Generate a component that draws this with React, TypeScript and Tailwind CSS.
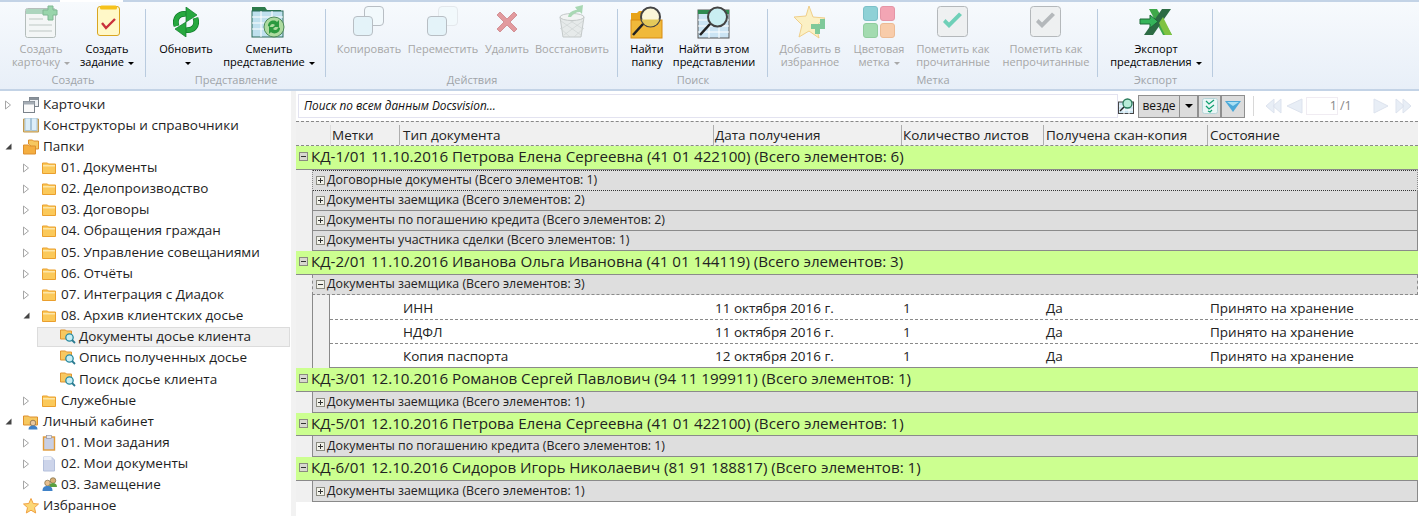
import React from 'react';

const font = { fontFamily: '"Open Sans", "Noto Sans", sans-serif' };

// ---- ribbon icons ----
const CardIcon = () => (
  <svg width="34" height="34" viewBox="0 0 34 34" className="opacity-70">
    <rect x="1.500" y="3.500" width="30" height="29" rx="2" fill="#f4f6f4" stroke="#9aa5a0" />
    <rect x="2" y="4" width="29" height="5" fill="#8fc7a5" />
    <path d="M5 14h14M5 20h23M5 26h23" stroke="#a9b4ae" />
    <path d="M20 5h5V1h5v4h4v5h-4v5h-5v-5h-5z" transform="translate(-1 0)" fill="#72c689" stroke="#4f9c68" />
  </svg>
);
const TaskIcon = () => (
  <svg width="34" height="34" viewBox="0 0 34 34">
    <rect x="7.500" y="1.500" width="22" height="29" rx="2.500" fill="#fff8c8" stroke="#d9a520" />
    <rect x="10" y=".5" width="17" height="4" rx="1.500" fill="#f6c21c" />
    <path d="M12 18l4 5 9-9" fill="none" stroke="#c9303c" strokeWidth="2.400" />
  </svg>
);
const RefreshArrow = () => (
  <>
    <path d="M3.500 19C1 11 6 6 13 7" fill="none" stroke="#0f7a2a" strokeWidth="5.800" />
    <path d="M3.500 19C1 11 6 6 13 7" fill="none" stroke="#27a83f" strokeWidth="4.400" />
    <path d="M13 0l11 8-11 7z" fill="#27a83f" stroke="#0f7a2a" strokeWidth=".7" />
  </>
);
const RefreshIcon = () => (
  <svg width="26" height="30" viewBox="0 0 26 30">
    <RefreshArrow />
    <g transform="rotate(180 13 15)">
      <RefreshArrow />
    </g>
  </svg>
);
const ChangeViewIcon = () => (
  <svg width="36" height="36" viewBox="0 0 36 36">
    <path d="M1 8V3h13l2 3h14v4z" fill="#2d7a4a" />
    <rect x="1" y="7" width="31" height="26" fill="#bfe0ee" stroke="#2a6a5a" />
    <path d="M1 13h31M1 19h31M1 25h31M10 7v26M21 7v26" stroke="#fff" />
    <circle cx="23" cy="23" r="10" fill="#aedba0" stroke="#4d8a58" />
    <path d="M17 22c0-5 6-7 9-4l2-2v7h-6l2-2c-2-2-5-1-5 2zM29 24c0 5-6 7-9 4l-2 2v-7h6l-2 2c2 2 5 1 5-2z" fill="#2c9a40" />
  </svg>
);
const CopyIcon = ({ faded }: { faded?: boolean }) => (
  <svg width="34" height="34" viewBox="0 0 34 34">
    <rect x="12.500" y="1.500" width="19" height="19" rx="3.500" fill="#f2f9fc" stroke={faded ? '#e4e8ec' : '#b8bec4'} />
    <rect x="1.500" y="11.500" width="19" height="19" rx="3.500" fill="#e4f3f9" stroke="#b8bec4" />
  </svg>
);
const DeleteIcon = () => (
  <svg width="24" height="24" viewBox="0 0 24 24">
    <path d="M2 5l3-3 7 7 7-7 3 3-7 7 7 7-3 3-7-7-7 7-3-3 7-7z" fill="#e29a9e" stroke="#c97a80" strokeWidth=".7" />
  </svg>
);
const RestoreIcon = () => (
  <svg width="28" height="36" viewBox="0 0 28 36">
    <path d="M2 13h24l-3 20H5z" fill="#e6eaea" stroke="#c4c9c9" />
    <path d="M3 17l20 14M8 14l17 11M2 24l10 9M25 17L6 31M20 14L3 25M26 24l-10 9" stroke="#cfd4d4" strokeWidth=".7" />
    <ellipse cx="14" cy="13" rx="12" ry="3.500" fill="#f2f4f4" stroke="#c4c9c9" />
    <path d="M10 13c1-5 5-7 9-7l-2-3 8-2-1 9-2-2c-4 0-7 2-9 5z" fill="#a9d8b4" />
  </svg>
);
const FindFolderIcon = () => (
  <svg width="34" height="34" viewBox="0 0 34 34">
    <path d="M1 33V8h6l2-2h8v27z" fill="#e8a317" />
    <rect x="1" y="15" width="31" height="18" fill="#f0b93a" stroke="#d98c10" />
    <circle cx="20.500" cy="12" r="9.500" fill="#faf6d8" stroke="#444" strokeWidth="2" />
    <path d="M11.500 14.500h18a9.300 9.300 0 0 1-18 0z" fill="#e4c95a" />
    <path d="M13 19L3 30" stroke="#222" strokeWidth="2.600" />
  </svg>
);
const FindViewIcon = () => (
  <svg width="34" height="34" viewBox="0 0 34 34">
    <rect x="1" y="5" width="31" height="28" fill="#cbe4f4" stroke="#555" />
    <rect x="1" y="5" width="31" height="4" fill="#2d8a50" />
    <path d="M1 15h31M1 21h31M1 27h31M12 9v24M22 9v24" stroke="#fff" />
    <circle cx="20.500" cy="12" r="9.500" fill="#c9eef2" stroke="#444" strokeWidth="2" />
    <path d="M13 19L3 30" stroke="#222" strokeWidth="2.600" />
  </svg>
);
const StarAddIcon = () => (
  <svg width="34" height="34" viewBox="0 0 34 34">
    <path d="M16 1l4 11 12 1-9 8 3 12-10-7-10 6 3-12-8-8 12-1z" fill="#fbf0c4" stroke="#f0cf8a" />
    <path d="M22 19h5v-5h5v5h0v5h-5v5h-5v-5h-4v-5z" fill="#7fc99a" />
  </svg>
);
const ColorIcon = () => (
  <div className="grid grid-cols-2 gap-[2px] w-[32px] h-[32px]">
    <div className="rounded-[3px] bg-[#8ed1d6] border border-[#7cc0c8]" />
    <div className="rounded-[3px] bg-[#f3a5b4] border border-[#e595a6]" />
    <div className="rounded-[3px] bg-[#a3dbb0] border border-[#90cc9e]" />
    <div className="rounded-[3px] bg-[#f8ccaa] border border-[#ecbb94]" />
  </div>
);
const CheckIcon = ({ color }: { color: string }) => (
  <svg width="32" height="32" viewBox="0 0 32 32">
    <rect x=".5" y=".5" width="30" height="30" rx="3" fill="#eef0f1" stroke="#b4b8bb" />
    <path d="M6 16l6 6 13-13-3-2.500-10 10-3.500-3.500z" fill={color} />
  </svg>
);
const ExportIcon = () => (
  <svg width="34" height="28" viewBox="0 0 34 28">
    <path d="M10 1h8l15 26h-9z" fill="#3fa84a" />
    <path d="M23 1h9L14 27H5z" fill="#2c6b44" />
    <path d="M20 15l6 12h7L24 9z" fill="#7fc241" />
    <path d="M1 11h10V7l8 6.500L11 20v-4H1z" fill="#35b45a" stroke="#1e6a38" />
  </svg>
);

// ---- ribbon ----
type RibbonBtn = { w: string; icon: React.ReactNode; lines: string[]; arrow?: boolean; off?: boolean };
type RibbonGroup = { title: string; w: string; pl: string; items: RibbonBtn[] };

const groups: RibbonGroup[] = [
  {
    title: 'Создать', w: 'w-[146px]', pl: 'pl-[8px]',
    items: [
      { w: 'w-[66px]', icon: <CardIcon />, lines: ['Создать', 'карточку'], arrow: true, off: true },
      { w: 'w-[66px]', icon: <TaskIcon />, lines: ['Создать', 'задание'], arrow: true },
    ],
  },
  {
    title: 'Представление', w: 'w-[180px]', pl: 'pl-[10px]',
    items: [
      { w: 'w-[60px]', icon: <RefreshIcon />, lines: ['Обновить', ''], arrow: true },
      { w: 'w-[106px]', icon: <ChangeViewIcon />, lines: ['Сменить', 'представление'], arrow: true },
    ],
  },
  {
    title: 'Действия', w: 'w-[292px]', pl: 'pl-[7px]',
    items: [
      { w: 'w-[72px]', icon: <CopyIcon />, lines: ['Копировать'], off: true },
      { w: 'w-[76px]', icon: <CopyIcon faded />, lines: ['Переместить'], off: true },
      { w: 'w-[52px]', icon: <DeleteIcon />, lines: ['Удалить'], off: true },
      { w: 'w-[78px]', icon: <RestoreIcon />, lines: ['Восстановить'], off: true },
    ],
  },
  {
    title: 'Поиск', w: 'w-[150px]', pl: 'pl-[9px]',
    items: [
      { w: 'w-[40px]', icon: <FindFolderIcon />, lines: ['Найти', 'папку'] },
      { w: 'w-[94px]', icon: <FindViewIcon />, lines: ['Найти в этом', 'представлении'] },
    ],
  },
  {
    title: 'Метка', w: 'w-[330px]', pl: 'pl-[4px]',
    items: [
      { w: 'w-[76px]', icon: <StarAddIcon />, lines: ['Добавить в', 'избранное'], off: true },
      { w: 'w-[62px]', icon: <ColorIcon />, lines: ['Цветовая', 'метка'], arrow: true, off: true },
      { w: 'w-[86px]', icon: <CheckIcon color="#6fd0b8" />, lines: ['Пометить как', 'прочитанные'], off: true },
      { w: 'w-[100px]', icon: <CheckIcon color="#b4b8bb" />, lines: ['Пометить как', 'непрочитанные'], off: true },
    ],
  },
  {
    title: 'Экспорт', w: 'w-[115px]', pl: 'pl-[2px]',
    items: [{ w: 'w-[112px]', icon: <ExportIcon />, lines: ['Экспорт', 'представления'], arrow: true }],
  },
];

const Caret = ({ off }: { off?: boolean }) => (
  <span className={`inline-block ml-[4px] align-middle border-x-[3px] border-t-[3px] border-x-transparent ${off ? 'border-t-[#a8a8a8]' : 'border-t-black'}`} />
);

const Ribbon = () => (
  <div className="relative h-[91px] flex border-t-2 border-b-2 border-t-[#c3d3e6] border-b-[#c3d3e6] bg-gradient-to-b from-[#f7fafd] to-[#e8eff8]">
    {/* активная вкладка над лентой */}
    <div className="absolute left-[60px] -top-[2px] w-[63px] h-[2px] bg-white" />
    {groups.map((g) => (
      <div key={g.title} className={`${g.w} shrink-0 relative ${g.pl}`}>
        <div className="flex">
          {g.items.map((b) => (
            <div key={b.lines.join()} className={`${b.w} shrink-0 flex flex-col items-center text-[11px] leading-[13px] whitespace-nowrap ${b.off ? 'text-[#a6a6a6]' : 'text-black'}`}>
              <div className="h-[38px] mt-[1px] flex items-center justify-center">{b.icon}</div>
              <div className="mt-[1px]">{b.lines[0]}</div>
              {b.lines.length > 1 && (
                <div className="h-[13px]">
                  {b.lines[1]}
                  {b.arrow && <Caret off={b.off} />}
                </div>
              )}
            </div>
          ))}
        </div>
        <div className="absolute left-0 right-0 top-[71px] text-center text-[11px] leading-[14px] text-[#a0a4a8]">{g.title}</div>
        <div className="absolute right-0 top-[7px] h-[68px] w-px bg-[#b9cbdf]" />
      </div>
    ))}
  </div>
);

// ---- tree ----
const Folder = () => (
  <svg width="14" height="12" viewBox="0 0 14 12">
    <path d="M.5 2V1h5l1 1h7v9.500H.5z" fill="#fbc95a" stroke="#ea9f2d" />
    <rect x="1" y="3" width="12" height="1.500" fill="#fde6a8" />
  </svg>
);
const SearchFolder = () => (
  <svg width="16" height="15" viewBox="0 0 16 15">
    <path d="M.5 10V1h5l1 1h5v8z" fill="#f8c860" stroke="#e09530" />
    <circle cx="9.500" cy="8.500" r="3.700" fill="#c8eef4" stroke="#2a8aa0" strokeWidth="1.300" />
    <path d="M12 11l3 3" stroke="#2a7a90" strokeWidth="1.800" />
  </svg>
);
const CardsIcon = () => (
  <svg width="16" height="16" viewBox="0 0 16 16">
    <rect x="6.500" y=".5" width="9" height="9" fill="#eef1f4" stroke="#7a828a" />
    <rect x="6.500" y=".5" width="9" height="2.500" fill="#8a929a" />
    <rect x=".5" y="4.500" width="11" height="11" fill="#fafafa" stroke="#7a828a" />
    <rect x=".5" y="4.500" width="11" height="3" fill="#a4acb4" />
  </svg>
);
const BookIcon = () => (
  <svg width="16" height="15" viewBox="0 0 16 15">
    <path d="M.5 1h15v13H.5z" fill="#e6c88c" stroke="#c09a50" />
    <path d="M2 0h5.500v12.500H2zM8.500 0H14v12.500H8.500z" fill="#dceef8" stroke="#a6c4d8" />
  </svg>
);
const FoldersIcon = () => (
  <svg width="16" height="16" viewBox="0 0 16 16">
    <path d="M5.500 5V1h4l1 1h5v8h-4z" fill="#f6c860" stroke="#dd8f2c" />
    <path d="M.5 15V6h5l1 1h6v8z" fill="#f4ae40" stroke="#dd8f2c" />
  </svg>
);
const CabinetIcon = () => (
  <svg width="16" height="16" viewBox="0 0 16 16">
    <path d="M.5 11V2h5l1 1h8v8z" fill="#f6c860" stroke="#dd8f2c" />
    <circle cx="10" cy="9" r="2.800" fill="#e8c8a0" stroke="#7a6040" strokeWidth=".7" />
    <path d="M5.500 15.500c0-3 2-4 4.500-4s4.500 1 4.500 4z" fill="#3f82c8" />
  </svg>
);
const TasksIcon = () => (
  <svg width="14" height="16" viewBox="0 0 14 16">
    <rect x="1.500" y="2" width="11" height="13" fill="#c8cfe4" stroke="#e09a38" strokeWidth="1.400" />
    <rect x="4.500" y=".5" width="5" height="3" fill="#e4e6ee" stroke="#8a8a9a" strokeWidth=".6" />
  </svg>
);
const DocsIcon = () => (
  <svg width="14" height="16" viewBox="0 0 14 16">
    <path d="M1.500 1h8l3 3v11h-11z" fill="#ccd4ea" stroke="#b4c0dc" />
    <rect x="1.500" y="1" width="8" height="3" fill="#eef1f8" />
  </svg>
);
const DeputyIcon = () => (
  <svg width="16" height="15" viewBox="0 0 16 15">
    <circle cx="11" cy="3.500" r="2.800" fill="#d8b078" stroke="#6a5a30" strokeWidth=".6" />
    <path d="M7 10c0-3 2-4 4-4s4 1 4 4z" fill="#5aa040" />
    <circle cx="5.500" cy="6" r="2.800" fill="#e8c090" stroke="#6a5a30" strokeWidth=".6" />
    <path d="M.5 14c0-4 2-5 5-5s5 1 5 5z" fill="#3f82c8" />
  </svg>
);
const StarIcon = () => (
  <svg width="16" height="16" viewBox="0 0 16 16">
    <path d="M8 .5l2.200 5 5.300.5-4 3.600 1.200 5.400L8 12.200 3.300 15l1.200-5.400-4-3.600 5.300-.5z" fill="#fbd776" stroke="#f0a040" />
  </svg>
);

type TreeRow = { depth: 0 | 1 | 2; label: string; icon: React.ReactNode; state?: 'open' | 'closed'; selected?: boolean; gap?: boolean };

const treeRows: TreeRow[] = [
  { depth: 0, label: 'Карточки', icon: <CardsIcon />, state: 'closed' },
  { depth: 0, label: 'Конструкторы и справочники', icon: <BookIcon /> },
  { depth: 0, label: 'Папки', icon: <FoldersIcon />, state: 'open' },
  { depth: 1, label: '01. Документы', icon: <Folder />, state: 'closed' },
  { depth: 1, label: '02. Делопроизводство', icon: <Folder />, state: 'closed' },
  { depth: 1, label: '03. Договоры', icon: <Folder />, state: 'closed' },
  { depth: 1, label: '04. Обращения граждан', icon: <Folder />, state: 'closed' },
  { depth: 1, label: '05. Управление совещаниями', icon: <Folder />, state: 'closed', gap: true },
  { depth: 1, label: '06. Отчёты', icon: <Folder />, state: 'closed' },
  { depth: 1, label: '07. Интеграция с Диадок', icon: <Folder />, state: 'closed' },
  { depth: 1, label: '08. Архив клиентских досье', icon: <Folder />, state: 'open' },
  { depth: 2, label: 'Документы досье клиента', icon: <SearchFolder />, selected: true },
  { depth: 2, label: 'Опись полученных досье', icon: <SearchFolder /> },
  { depth: 2, label: 'Поиск досье клиента', icon: <SearchFolder />, gap: true },
  { depth: 1, label: 'Служебные', icon: <Folder />, state: 'closed' },
  { depth: 0, label: 'Личный кабинет', icon: <CabinetIcon />, state: 'open' },
  { depth: 1, label: '01. Мои задания', icon: <TasksIcon />, state: 'closed' },
  { depth: 1, label: '02. Мои документы', icon: <DocsIcon />, state: 'closed' },
  { depth: 1, label: '03. Замещение', icon: <DeputyIcon />, state: 'closed' },
  { depth: 0, label: 'Избранное', icon: <StarIcon /> },
];

const Expander = ({ state }: { state?: 'open' | 'closed' }) => (
  <div className="w-[8px] h-[10px] shrink-0 flex items-center">
    {state === 'closed' && (
      <svg width="6" height="10" viewBox="0 0 6 10"><path d="M.5 1l5 4-5 4z" fill="#fff" stroke="#a6a6a6" /></svg>
    )}
    {state === 'open' && (
      <svg width="7" height="7" viewBox="0 0 7 7"><path d="M6.500.5v6h-6z" fill="#444" /></svg>
    )}
  </div>
);

const Tree = () => (
  <div className="w-[291px] shrink-0 bg-white pt-[3px] text-[13.500px] text-[#1e1e1e] overflow-hidden">
    {treeRows.map((r) => (
      <div key={r.label} className={`h-[21px] flex items-center whitespace-nowrap ${r.gap ? 'mt-[1px]' : ''}`}>
        {r.depth === 2 ? (
          <div className={`ml-[37px] w-[253px] h-[20px] flex items-center ${r.selected ? 'pl-[22px] bg-[#f0f0f0] border border-[#dcdcdc]' : 'pl-[23px]'}`}>
            <div className="w-[19px] shrink-0">{r.icon}</div>
            <span>{r.label}</span>
          </div>
        ) : (
          <div className={`flex items-center ${r.depth === 0 ? 'pl-[5px]' : 'pl-[23px]'}`}>
            <Expander state={r.state} />
            <div className={`flex ${r.depth === 0 ? 'ml-[10px] w-[20px]' : 'ml-[11px] w-[19px]'}`}>{r.icon}</div>
            <span>{r.label}</span>
          </div>
        )}
      </div>
    ))}
  </div>
);

// ---- table ----
const Box = ({ open, dark }: { open?: boolean; dark?: boolean }) => (
  <svg width="9" height="9" viewBox="0 0 9 9" className="shrink-0">
    <rect x=".5" y=".5" width="8" height="8" fill={dark ? '#d8d8d0' : '#f2f2ea'} stroke="#8a8a80" />
    <path d="M2 4.500h5" stroke="#333" />
    {!open && <path d="M4.500 2v5" stroke="#333" />}
  </svg>
);

const GroupRow = ({ label, h }: { label: string; h: string }) => (
  <div className={`${h} bg-[#ccff90] border-b border-b-[#8a8a8a] flex items-center pl-[3px] text-[15.150px] text-[#222] whitespace-nowrap`}>
    <Box open dark />
    <span className="ml-[3px]">{label}</span>
  </div>
);

const SubRow = ({ label, open, focus, h = 'h-[20px]' }: { label: string; open?: boolean; focus?: boolean; h?: string }) => (
  <div className={`${h} ml-[16px] bg-[#dedede] flex items-center pl-[3px] text-[12.400px] text-[#222] whitespace-nowrap border-l border-l-[#8a8a8a] border-r border-r-[#8a8a8a] ${focus ? 'border border-dotted border-[#333]' : open ? 'border-b border-dashed border-b-[#8a8a8a]' : 'border-b border-b-[#8a8a8a]'}`}>
    <Box open={open} />
    <span className="ml-[2px]">{label}</span>
  </div>
);

const DataRow = ({ name, date, border, h }: { name: string; date: string; border: string; h: string }) => (
  <div className={`${h} ${border} flex bg-white items-center pt-[2px] text-[13.500px] text-[#222] whitespace-nowrap`}>
    <div className="w-[73px] shrink-0" />
    <div className="w-[312px] shrink-0">{name}</div>
    <div className="w-[188px] shrink-0">{date}</div>
    <div className="w-[143px] shrink-0">1</div>
    <div className="w-[164px] shrink-0">Да</div>
    <div>Принято на хранение</div>
  </div>
);

const headers = [
  { label: 'Метки', cls: 'w-[69px] pl-[1px] border-l-[#dcdcdc]' },
  { label: 'Тип документа', cls: 'w-[314px] pl-[3px] border-l-[#aeaeae]' },
  { label: 'Дата получения', cls: 'w-[188px] pl-[1px] border-l-[#aeaeae]' },
  { label: 'Количество листов', cls: 'w-[142px] pl-[1px] border-l-[#aeaeae]' },
  { label: 'Получена скан-копия', cls: 'w-[164px] pl-[2px] border-l-[#aeaeae]' },
  { label: 'Состояние', cls: 'flex-1 pl-[2px] border-l-[#aeaeae]' },
];

const Toolbar = () => (
  <div className="h-[24px] flex items-center pl-[2px]">
    <div className="w-[820px] h-[24px] shrink-0 bg-white border border-[#e3e3f0] pl-[5px] flex items-center italic text-[11.800px] text-[#111]">
      Поиск по всем данным Docsvision...
    </div>
    <div className="w-[20px] flex justify-start">
      <svg width="16" height="16" viewBox="0 0 16 16">
        <rect x=".5" y="4" width="15" height="11.500" fill="#cde6f2" stroke="#444" />
        <path d="M1 8h14M1 12h14M6 4v12M11 4v12" stroke="#fff" />
        <circle cx="9.500" cy="5.500" r="4.500" fill="#b8ecd8" stroke="#2a7a5a" strokeWidth="1.300" />
        <path d="M6 9l-4 4" stroke="#222" strokeWidth="1.500" />
      </svg>
    </div>
    <div className="w-[42px] h-[23px] bg-[#dcdcdc] border border-[#8f8f8f] flex items-center justify-center text-[12px] text-[#111]">везде</div>
    <div className="w-[17px] h-[23px] bg-[#dcdcdc] border-y border-[#8f8f8f] flex items-center justify-center">
      <span className="border-x-[4px] border-t-[4px] border-x-transparent border-t-black" />
    </div>
    <div className="w-[25px] h-[23px] bg-[#dcdcdc] border-x-2 border-y border-[#8f8f8f] flex items-center justify-center">
      <svg width="16" height="16" viewBox="0 0 16 16">
        <rect x=".5" y=".5" width="15" height="15" rx="2" fill="#eaf6f6" stroke="#b6d4d8" />
        <path d="M4 3l3 3 5-4M4 8l3 3 5-4M6 13l2 1 2-2" fill="none" stroke="#12a070" strokeWidth="1.300" />
      </svg>
    </div>
    <div className="w-[23px] h-[23px] bg-[#dcdcdc] border border-l-0 border-[#8f8f8f] flex items-center justify-center">
      <svg width="16" height="11" viewBox="0 0 16 11"><path d="M0 0h16L8 11z" fill="#4aa8d8" /><path d="M2 1h12L8 5z" fill="#a8e0f4" /></svg>
    </div>
    <div className="w-px h-[20px] bg-[#d8d8d8] ml-[8px]" />
    <div className="flex items-center ml-[11px]">
      <svg width="38" height="16" viewBox="0 0 38 16" fill="#e8eef6" stroke="#dde3ee">
        <path d="M9 1v14L1 8zM16 1v14L8 8zM37 1v14L22 8z" />
      </svg>
      <div className="w-[32px] h-[18px] ml-[3px] border border-[#f0ecf2] text-right text-[12.500px] leading-[16px] text-[#888]">1</div>
      <div className="w-[35px] pl-[2px] text-[12.500px] leading-[16px] text-[#888]">/1</div>
      <svg width="45" height="16" viewBox="0 0 45 16" fill="#e8eef6" stroke="#dde3ee">
        <path d="M1 1v14l14-7zM23 1v14l8-7zM30 1v14l8-7z" />
      </svg>
    </div>
  </div>
);

const Table = () => (
  <div className="flex-1 min-w-0 pr-px bg-white">
    <div className="pt-[3px]">
      <Toolbar />
    </div>
    <div className="border-t border-dashed border-t-[#888] mt-[3px] h-[25px] flex bg-[#f0f0f0] border-b border-b-[#8a8a8a] pt-[3px] text-[13.500px] text-[#222] pl-[34px] whitespace-nowrap">
      {headers.map((c) => (
        <div key={c.label} className={`${c.cls} shrink-0 flex items-center border-l`}>{c.label}</div>
      ))}
    </div>
    <div className="bg-[#f0f0f0]">
      <GroupRow h="h-[24px] pb-[3px]" label="КД-1/01 11.10.2016 Петрова Елена Сергеевна (41 01 422100) (Всего элементов: 6)" />
      <SubRow label="Договорные документы (Всего элементов: 1)" focus h="h-[21px]" />
      <SubRow label="Документы заемщика (Всего элементов: 2)" />
      <SubRow label="Документы по погашению кредита (Всего элементов: 2)" />
      <SubRow label="Документы участника сделки (Всего элементов: 1)" />
      <GroupRow h="h-[24px] pb-[3px]" label="КД-2/01 11.10.2016 Иванова Ольга Ивановна (41 01 144119) (Всего элементов: 3)" />
      <SubRow label="Документы заемщика (Всего элементов: 3)" open />
      <div className="ml-[16px] pl-[16px] border-l border-l-[#8a8a8a]">
        <div className="border-l border-l-[#8a8a8a]">
          <DataRow h="h-[25px]" name="ИНН" date="11 октября 2016 г." border="border-b border-dashed border-b-[#8a8a8a]" />
          <DataRow h="h-[24px]" name="НДФЛ" date="11 октября 2016 г." border="border-b border-dashed border-b-[#8a8a8a]" />
          <DataRow h="h-[24px]" name="Копия паспорта" date="12 октября 2016 г." border="border-b border-b-[#8a8a8a]" />
        </div>
      </div>
      <GroupRow h="h-[24px] pb-[3px]" label="КД-3/01 12.10.2016 Романов Сергей Павлович (94 11 199911) (Всего элементов: 1)" />
      <SubRow label="Документы заемщика (Всего элементов: 1)" h="h-[21px]" />
      <GroupRow h="h-[23px] pb-[1px]" label="КД-5/01 12.10.2016 Петрова Елена Сергеевна (41 01 422100) (Всего элементов: 1)" />
      <SubRow label="Документы по погашению кредита (Всего элементов: 1)" h="h-[21px]" />
      <GroupRow h="h-[24px] pb-[3px]" label="КД-6/01 12.10.2016 Сидоров Игорь Николаевич (81 91 188817) (Всего элементов: 1)" />
      <SubRow label="Документы заемщика (Всего элементов: 1)" h="h-[21px]" />
    </div>
  </div>
);

export default function App() {
  return (
    <div className="w-[1419px] h-[516px] overflow-hidden bg-white flex flex-col" style={font}>
      <Ribbon />
      <div className="flex flex-1 min-h-0">
        <Tree />
        <div className="w-[5px] shrink-0 bg-[#f2f2f2]" />
        <Table />
      </div>
    </div>
  );
}
